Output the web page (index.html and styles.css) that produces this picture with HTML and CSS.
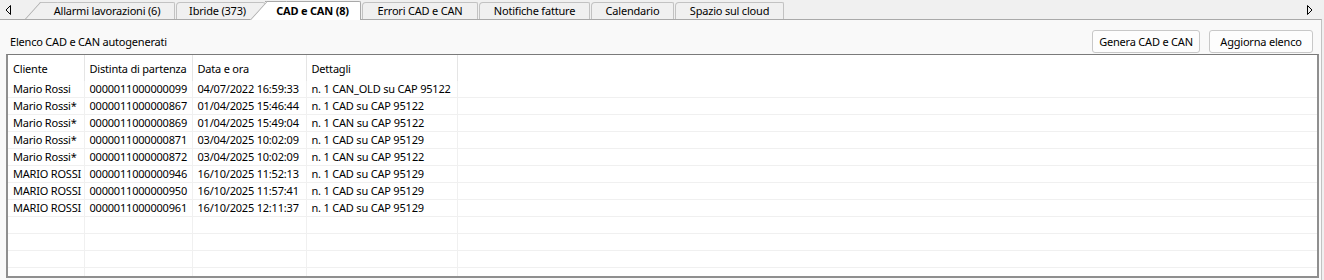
FILE: index.html
```html
<!DOCTYPE html>
<html lang="it">
<head>
    <meta charset="UTF-8">
    <title>CAD e CAN</title>
    <link rel="stylesheet" href="styles.css">
</head>
<body>
    <div class="tabbar">
        <span class="arrow left">
            <svg width="7" height="10" viewBox="0 0 7 10"><path d="M5.5 0.5 L1 5 L5.5 9.5 Z" fill="none" stroke="#000" stroke-width="1"/></svg>
        </span>
        <div class="tab first" style="width:135px">Allarmi lavorazioni (6)</div>
        <div class="tab under" style="width:89px">Ibride (373)</div>
        <div class="tab active" style="width:96px">CAD e CAN (8)</div>
        <div class="tab" style="width:116px">Errori CAD e CAN</div>
        <div class="tab" style="width:111px">Notifiche fatture</div>
        <div class="tab" style="width:83px">Calendario</div>
        <div class="tab" style="width:109px">Spazio sul cloud</div>
        <span class="spacer"></span>
        <span class="arrow right">
            <svg width="7" height="10" viewBox="0 0 7 10"><path d="M1.5 0.5 L6 5 L1.5 9.5 Z" fill="none" stroke="#000" stroke-width="1"/></svg>
        </span>
    </div>

    <div class="panel">
        <div class="toolbar">
            <span class="title">Elenco CAD e CAN autogenerati</span>
            <span class="spacer"></span>
            <button class="btn" style="width:108px">Genera CAD e CAN</button>
            <button class="btn" style="width:104px">Aggiorna elenco</button>
        </div>

        <div class="grid">
            <table>
                <colgroup>
                    <col style="width:76px">
                    <col style="width:108px">
                    <col style="width:114px">
                    <col style="width:151px">
                    <col>
                </colgroup>
                <thead>
                    <tr>
                        <th>Cliente</th>
                        <th>Distinta di partenza</th>
                        <th>Data e ora</th>
                        <th>Dettagli</th>
                        <th class="fill"></th>
                    </tr>
                </thead>
                <tbody id="rows"></tbody>
            </table>
        </div>
    </div>

    <script>
        const data = [
            ['Mario Rossi', '0000011000000099', '04/07/2022 16:59:33', 'n. 1 CAN_OLD su CAP 95122'],
            ['Mario Rossi*', '0000011000000867', '01/04/2025 15:46:44', 'n. 1 CAD su CAP 95122'],
            ['Mario Rossi*', '0000011000000869', '01/04/2025 15:49:04', 'n. 1 CAN su CAP 95122'],
            ['Mario Rossi*', '0000011000000871', '03/04/2025 10:02:09', 'n. 1 CAD su CAP 95129'],
            ['Mario Rossi*', '0000011000000872', '03/04/2025 10:02:09', 'n. 1 CAN su CAP 95122'],
            ['MARIO ROSSI', '0000011000000946', '16/10/2025 11:52:13', 'n. 1 CAD su CAP 95129'],
            ['MARIO ROSSI', '0000011000000950', '16/10/2025 11:57:41', 'n. 1 CAD su CAP 95129'],
            ['MARIO ROSSI', '0000011000000961', '16/10/2025 12:11:37', 'n. 1 CAD su CAP 95129']
        ];
        const tbody = document.getElementById('rows');
        for (let i = 0; i < 12; i++) {
            const tr = document.createElement('tr');
            const row = data[i] || ['', '', '', ''];
            row.concat(['']).forEach(text => {
                const td = document.createElement('td');
                td.textContent = text;
                tr.appendChild(td);
            });
            tbody.appendChild(tr);
        }
    </script>
</body>
</html>
```

FILE: styles.css
```css
body {
    margin: 0;
    font-family: "Noto Sans", "Open Sans", sans-serif;
    font-size: 11px;
    letter-spacing: -0.2px;
    color: #000;
    background-color: #f0f0f0;
    height: 280px;
    overflow: hidden;
}
.tabbar {
    display: flex;
    align-items: flex-end;
    height: 19px;
    position: relative;
}
.arrow {
    display: flex;
    align-items: center;
    justify-content: center;
    height: 19px;
}
.arrow.left {
    width: 17px;
    margin-right: 8px;
}
.arrow.right {
    width: 16px;
    margin-right: 7px;
}
.spacer {
    flex: 1;
}
.tab {
    position: relative;
    box-sizing: border-box;
    height: 17px;
    line-height: 15px;
    margin-left: 1px;
    text-align: center;
    white-space: nowrap;
    background-color: #f0f0f0;
    border: 1px solid #c2c2c2;
    border-bottom: none;
    border-radius: 4px 2px 0 0;
}
.tab.under {
    padding-right: 6px;
}
.tab.first {
    margin-left: 15px;
    border-left: none;
    border-radius: 0 2px 0 0;
}
.tab.first::before,
.tab.active::before {
    content: "";
    position: absolute;
    top: -1px;
    bottom: 0;
    left: -15px;
    width: 17px;
    background-color: inherit;
    border-left: 1px solid #a9a9a9;
    border-top: 1px solid #c2c2c2;
    transform: skewX(-42deg);
    transform-origin: bottom left;
}
.tab.active {
    z-index: 2;
    height: 19px;
    line-height: 17px;
    font-weight: bold;
    background-color: #fff;
    border-color: #a9a9a9;
    border-left: none;
    border-radius: 0 2px 0 0;
    margin-left: 0;
    margin-bottom: -1px;
}
.tab.active::before {
    width: 19px;
    border-top-color: #a9a9a9;
    z-index: -1;
}
.panel {
    box-sizing: border-box;
    height: 261px;
    margin-right: 2px;
    background-color: #f9f9f9;
    border-top: 1px solid #a9a9a9;
    border-right: 1px solid #c2c2c2;
}
.toolbar {
    display: flex;
    align-items: center;
    height: 34px;
    padding: 0 8px 0 10px;
}
.title {
    padding-top: 8px;
}
.btn {
    font-family: inherit;
    font-size: 11px;
    letter-spacing: -0.2px;
    color: #000;
    height: 23px;
    margin-left: 9px;
    padding: 0;
    margin-top: 8px;
    background-color: #fdfdfd;
    border: 1px solid #c8c8c8;
    border-radius: 3px;
}
.grid {
    box-sizing: border-box;
    height: 224px;
    margin: 0 2px 0 6px;
    overflow: hidden;
    background-color: #fff;
    border: 2px solid #8f8f8f;
    border-top: 1px solid #7a7a7a;
}
table {
    width: 100%;
    table-layout: fixed;
    border-collapse: collapse;
}
th {
    height: 25px;
    padding: 0 5px;
    font-weight: normal;
    text-align: left;
    white-space: nowrap;
    border-right: 1px solid #e5e5e5;
    border-top: 1px solid #fff;
}
th.fill {
    border-right: none;
}
td {
    height: 16px;
    padding: 0 5px;
    line-height: 16px;
    white-space: nowrap;
    overflow: hidden;
    border-right: 1px solid #f0f0f0;
    border-bottom: 1px solid #f0f0f0;
}
td:last-child {
    border-right: none;
}
```
